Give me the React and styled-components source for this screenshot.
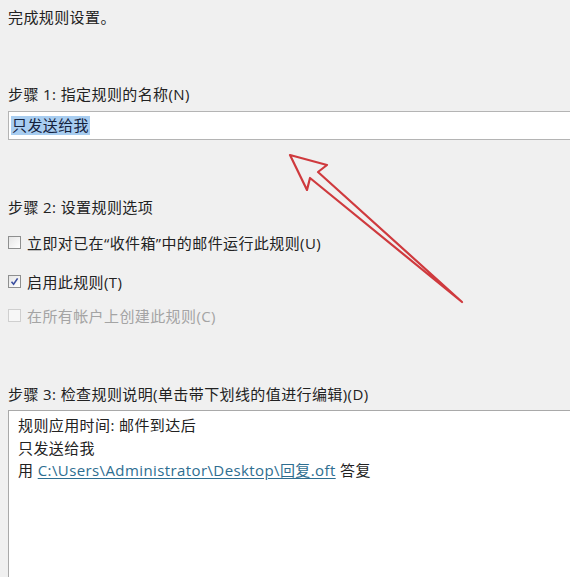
import React from "react";
import styled, { createGlobalStyle } from "styled-components";

const Global = createGlobalStyle`
  html, body {
    margin: 0;
    padding: 0;
    background: #f0f0f0;
  }
  body {
    font-family: "Open Sans", "Noto Sans CJK SC", "Liberation Sans", sans-serif;
    font-size: 15px;
    letter-spacing: 0.4px;
    color: #222222;
    overflow: hidden;
  }
`;

const Page = styled.div`
  position: relative;
  width: 570px;
  height: 577px;
  padding: 7px 0 0 8px;
  box-sizing: border-box;
  overflow: hidden;
`;

const Line = styled.div`
  line-height: 20px;
  height: 20px;
  white-space: nowrap;
  margin-top: ${(p) => p.$top || 0}px;
`;

const NameBox = styled.div`
  margin-top: 7px;
  margin-right: -4px;
  height: 27px;
  background: #ffffff;
  border: 1px solid #b4b4b4;
  border-right: none;
  display: flex;
  align-items: center;
  padding-left: 2px;
`;

const Selected = styled.span`
  background: #a8cdf0;
  color: #14213d;
  line-height: 19px;
  padding: 0 1px;
`;

const Option = styled.label`
  display: flex;
  align-items: center;
  gap: 6px;
  height: 20px;
  margin-top: ${(p) => p.$top}px;
  color: ${(p) => (p.$disabled ? "#a4a4a4" : "#222222")};
  white-space: nowrap;
`;

const Box = styled.span`
  width: 11px;
  height: 11px;
  border: 1px solid ${(p) => (p.$disabled ? "#cfcfcf" : "#8e8f8f")};
  background: ${(p) =>
    p.$disabled ? "#f7f7f7" : "linear-gradient(135deg, #e6e6e6, #ffffff)"};
  display: flex;
  align-items: center;
  justify-content: center;
  flex: none;
`;

const DescBox = styled.div`
  margin-top: 6px;
  margin-right: -4px;
  height: 200px;
  background: #ffffff;
  border: 1px solid #a9a9a9;
  border-right: none;
  border-bottom: none;
  padding: 3px 0 0 9px;
`;

const DescLine = styled.div`
  line-height: 22.5px;
  white-space: nowrap;
`;

const Link = styled.span`
  color: #2e6e91;
  text-decoration: underline;
  text-underline-offset: 2px;
`;

const Arrow = styled.svg`
  position: absolute;
  left: 0;
  top: 0;
  pointer-events: none;
`;

const Check = () => (
  <svg width="9" height="9" viewBox="0 0 9 9">
    <path d="M1.5 4.8 L3.6 7.2 L7.6 1.4" fill="none" stroke="#3b4fa0" strokeWidth="1.6" />
  </svg>
);

export default function App() {
  return (
    <>
      <Global />
      <Page>
        <Line>完成规则设置。</Line>
        <Line $top={57}>步骤 1: 指定规则的名称(N)</Line>
        <NameBox>
          <Selected>只发送给我</Selected>
        </NameBox>
        <Line $top={57}>步骤 2: 设置规则选项</Line>
        <Option $top={15}>
          <Box />
          立即对已在“收件箱”中的邮件运行此规则(U)
        </Option>
        <Option $top={19}>
          <Box>
            <Check />
          </Box>
          启用此规则(T)
        </Option>
        <Option $top={14} $disabled>
          <Box $disabled />
          在所有帐户上创建此规则(C)
        </Option>
        <Line $top={59}>步骤 3: 检查规则说明(单击带下划线的值进行编辑)(D)</Line>
        <DescBox>
          <DescLine>规则应用时间: 邮件到达后</DescLine>
          <DescLine>只发送给我</DescLine>
          <DescLine>
            用 <Link>C:\Users\Administrator\Desktop\回复.oft</Link> 答复
          </DescLine>
        </DescBox>
        <Arrow width="570" height="577" viewBox="0 0 570 577">
          <path
            d="M290 155 L327 165 L318 172 L462 302 L310 178 L307 190 Z"
            fill="none"
            stroke="#cf3a3e"
            strokeWidth="2.2"
            strokeLinejoin="round"
          />
        </Arrow>
      </Page>
    </>
  );
}
